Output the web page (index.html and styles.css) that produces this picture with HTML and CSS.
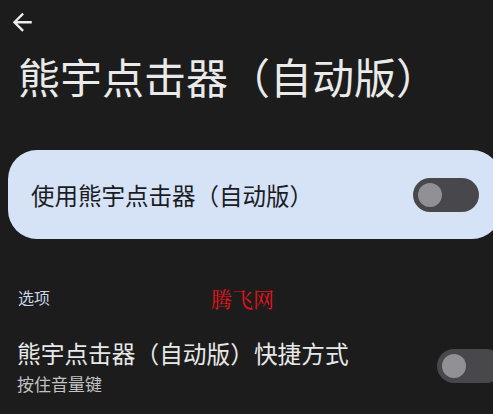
FILE: index.html
```html
<!DOCTYPE html>
<html lang="zh-CN">
<head>
<meta charset="utf-8">
<title>熊宇点击器（自动版）</title>
<link rel="stylesheet" href="styles.css">
</head>
<body>
<div class="page">
  <header class="topbar">
    <svg class="back" viewBox="0 0 24 24" width="28.5" height="28.5" aria-hidden="true">
      <path d="M20 11H7.83l5.59-5.59L12 4l-8 8 8 8 1.41-1.41L7.83 13H20v-2z" fill="currentColor"/>
    </svg>
  </header>
  <h1 class="title">熊宇点击器（自动版）</h1>
  <div class="card">
    <span class="card-label">使用熊宇点击器（自动版）</span>
    <span class="switch"><span class="thumb"></span></span>
  </div>
  <div class="section">
    <span class="section-label">选项</span>
    <span class="watermark">腾飞网</span>
  </div>
  <div class="row">
    <div class="row-text">
      <div class="row-title">熊宇点击器（自动版）快捷方式</div>
      <div class="row-sub">按住音量键</div>
    </div>
    <span class="switch"><span class="thumb"></span></span>
  </div>
</div>
</body>
</html>
```
FILE: styles.css
```css
html, body {
  margin: 0;
  padding: 0;
  background: #1c1c1c;
  overflow: hidden;
}
body {
  font-family: "Noto Sans CJK SC", "Noto Sans", sans-serif;
  color: #e6e6e6;
}
.page {
  width: 509px;
}
.topbar {
  height: 44px;
  padding: 8px 0 0 8px;
  box-sizing: border-box;
}
.back {
  display: block;
  color: #ededed;
}
.title {
  margin: 7px 0 0 0;
  padding-left: 18px;
  font-size: 42px;
  font-weight: 400;
  line-height: 50px;
  color: #eaeaea;
  white-space: nowrap;
}
.card {
  margin: 49px 8px 0 8px;
  height: 89px;
  background: #d6e3f7;
  border-radius: 29px;
  display: flex;
  align-items: center;
  justify-content: space-between;
  padding: 0 22px 0 23px;
  box-sizing: border-box;
}
.card-label {
  font-size: 23.5px;
  line-height: 34px;
  color: #1a1c1f;
  white-space: nowrap;
}
.switch {
  flex: none;
  width: 66px;
  height: 34px;
  border-radius: 17px;
  background: #48484c;
  display: flex;
  align-items: center;
  padding-left: 5px;
  box-sizing: border-box;
}
.thumb {
  width: 24px;
  height: 24px;
  border-radius: 50%;
  background: #919195;
}
.section {
  position: relative;
  margin-top: 46px;
  padding-left: 18px;
  height: 24px;
}
.section-label {
  font-size: 16px;
  line-height: 24px;
  color: #c8d4e8;
}
.watermark {
  position: absolute;
  left: 211px;
  top: 1px;
  font-family: "Noto Serif CJK SC", "Noto Sans CJK SC", serif;
  font-size: 21px;
  line-height: 24px;
  color: #e3141d;
}
.row {
  display: flex;
  align-items: center;
  justify-content: space-between;
  padding: 27px 6px 0 17px;
}
.row-title {
  font-size: 23.7px;
  line-height: 35px;
  color: #e8e8e8;
  white-space: nowrap;
}
.row-sub {
  font-size: 17px;
  line-height: 25px;
  color: #c2c2c2;
}
```
